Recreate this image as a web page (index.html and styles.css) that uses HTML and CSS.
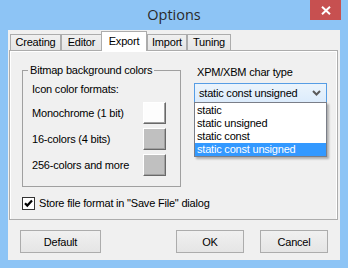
FILE: index.html
```html
<!DOCTYPE html>
<html>
<head>
<meta charset="utf-8">
<link rel="stylesheet" href="styles.css">
</head>
<body>
<div class="window">
  <div class="titlebar">
    <span class="title">Options</span>
    <div class="close">
      <svg width="10" height="9" viewBox="0 0 10 9"><path d="M1 0.8 L9 8.2 M9 0.8 L1 8.2" stroke="#fff" stroke-width="2"/></svg>
    </div>
  </div>
  <div class="client">
    <div class="tabs">
      <div class="tab t-creating">Creating</div>
      <div class="tab t-editor">Editor</div>
      <div class="tab t-export active">Export</div>
      <div class="tab t-import">Import</div>
      <div class="tab t-tuning">Tuning</div>
    </div>
    <div class="panel">
      <div class="panel-top">
        <fieldset class="group">
          <legend>Bitmap background colors</legend>
          <div class="caption">Icon color formats:</div>
          <div class="color-row first"><span>Monochrome (1 bit)</span><span class="swatch white"></span></div>
          <div class="color-row"><span>16-colors (4 bits)</span><span class="swatch"></span></div>
          <div class="color-row"><span>256-colors and more</span><span class="swatch"></span></div>
        </fieldset>
        <div class="chartype">
          <div class="label">XPM/XBM char type</div>
          <div class="combo">
            <span class="combo-text">static const unsigned</span>
            <svg class="chev" width="9" height="6" viewBox="0 0 9 6"><path d="M1 1 L4.5 4.5 L8 1" fill="none" stroke="#5a5a5a" stroke-width="2"/></svg>
            <ul class="dropdown">
              <li>static</li>
              <li>static unsigned</li>
              <li>static const</li>
              <li class="sel">static const unsigned</li>
            </ul>
          </div>
        </div>
      </div>
      <div class="check">
        <span class="box"><svg width="11" height="11" viewBox="0 0 11 11"><path d="M2 5.2 L4.3 7.6 L9 2.4" fill="none" stroke="#000" stroke-width="2.2"/></svg></span>
        <span>Store file format in "Save File" dialog</span>
      </div>
    </div>
    <div class="buttons">
      <button class="btn btn-default">Default</button>
      <span class="spacer"></span>
      <button class="btn btn-ok">OK</button>
      <button class="btn btn-cancel">Cancel</button>
    </div>
  </div>
</div>
</body>
</html>
```
FILE: styles.css
```css
* { box-sizing: border-box; }
html, body { margin: 0; padding: 0; }
body {
  width: 348px;
  height: 268px;
  overflow: hidden;
  font-family: "Liberation Sans", Arial, sans-serif;
  font-size: 11px;
  letter-spacing: -0.2px;
  color: #000;
}
.window {
  width: 348px;
  height: 268px;
  background: #8dc4f5;
  display: flex;
  flex-direction: column;
}
.titlebar {
  height: 30px;
  display: grid;
  grid-template-columns: 1fr auto 1fr;
  align-items: start;
}
.title {
  grid-column: 2;
  font-family: "Open Sans", "Noto Sans", sans-serif;
  font-size: 14.5px;
  letter-spacing: 0;
  color: #2a2a2a;
  line-height: 20px;
  margin-top: 5px;
}
.close {
  grid-column: 3;
  justify-self: end;
  margin-right: 7px;
  width: 31px;
  height: 20px;
  background: #c75050;
  display: flex;
  align-items: center;
  justify-content: center;
  padding-top: 1px;
}
.close svg { display: block; }
.client {
  margin: 0 8px 8px 8px;
  height: 230px;
  background: #f0f0f0;
  display: flex;
  flex-direction: column;
}
.tabs {
  height: 20px;
  display: flex;
  align-items: flex-end;
  padding-left: 2px;
}
.tab {
  height: 16px;
  border: 1px solid #acacac;
  border-bottom: none;
  background: linear-gradient(#f0f0f0, #e5e5e5);
  display: flex;
  align-items: center;
  justify-content: center;
  line-height: 13px;
}
.t-creating { width: 51px; }
.t-editor { width: 41px; }
.t-export { width: 46px; margin-left: -1px; }
.t-import { width: 40px; }
.t-tuning { width: 44px; }
.tab.active {
  height: 20px;
  margin-bottom: -1px;
  background: #fff;
  position: relative;
  z-index: 1;
  padding-bottom: 1px;
}
.panel {
  margin-left: 1px;
  width: 329px;
  height: 170px;
  border: 1px solid #acacac;
  box-shadow: inset 1px 1px 0 #fff, inset -1px 0 0 #fff;
  background: #f0f0f0;
  padding: 13px 0 0 12px;
}
.panel-top {
  display: flex;
  align-items: flex-start;
}
.group {
  margin: 0;
  width: 159px;
  border: 1px solid #a0a0a0;
  padding: 6px 14px 10px 9px;
}
.group legend {
  padding: 0 2px;
  margin-left: -4px;
  line-height: 13px;
}
.caption { line-height: 13px; }
.color-row {
  display: flex;
  align-items: center;
  justify-content: space-between;
  margin-top: 4px;
  line-height: 13px;
}
.color-row.first { margin-top: 6px; }
.swatch {
  width: 23px;
  height: 22px;
  background: #c0c0c0;
  border-top: 1px solid #fff;
  border-left: 1px solid #fff;
  border-right: 1px solid #696969;
  border-bottom: 1px solid #696969;
  box-shadow: inset -1px -1px 0 #a0a0a0;
}
.swatch.white { background: #fdfdfd; }
.chartype {
  margin-left: 13px;
  width: 133px;
}
.label {
  line-height: 13px;
  padding-left: 3px;
  margin-top: 2px;
}
.combo {
  position: relative;
  margin-top: 4px;
  height: 20px;
  border: 1px solid #569de5;
  background: linear-gradient(#ebf4fc, #dcecfc);
  display: flex;
  align-items: center;
  padding-left: 4px;
}
.combo-text { flex: 1; line-height: 13px; }
.chev { margin-right: 5px; }
.dropdown {
  position: absolute;
  top: 18px;
  left: -1px;
  right: -1px;
  margin: 0;
  padding: 1px 0 0 0;
  list-style: none;
  background: #fff;
  border: 1px solid #7a7e88;
  box-shadow: 2px 2px 2px rgba(0, 0, 0, 0.28);
  height: 55px;
}
.dropdown li {
  height: 13px;
  line-height: 13px;
  padding-left: 2px;
}
.dropdown li.sel {
  background: #3399ff;
  color: #fff;
}
.check {
  display: flex;
  align-items: center;
  gap: 4px;
  margin-top: 10px;
  line-height: 13px;
}
.box {
  width: 13px;
  height: 13px;
  border: 1px solid #333;
  background: #fff;
  display: flex;
  align-items: center;
  justify-content: center;
}
.box svg { display: block; }
.buttons {
  display: flex;
  margin: 10px 12px 0 12px;
}
.spacer { flex: 1; }
.btn {
  font-family: inherit;
  font-size: 11px;
  letter-spacing: -0.2px;
  height: 23px;
  border: 1px solid #acacac;
  background: linear-gradient(#f0f0f0, #e5e5e5);
  color: #000;
  padding: 0;
  margin: 0;
}
.btn-default { width: 81px; }
.btn-ok { width: 68px; margin-right: 16px; }
.btn-cancel { width: 68px; }
```
